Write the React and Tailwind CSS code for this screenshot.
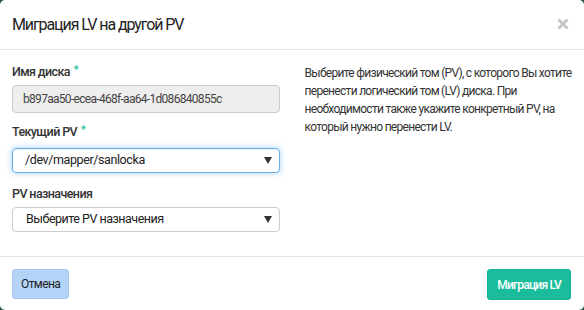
const font = { fontFamily: 'Roboto, "Liberation Sans", sans-serif' };

const Caret = () => (
  <svg width="8" height="7" viewBox="0 0 8 7" className="shrink-0">
    <path d="M0 0 L8 0 L4 7 Z" fill="#333" />
  </svg>
);

const Label = ({ children, required }) => (
  <div className="h-[18px] leading-[18px] text-[12.5px] font-medium tracking-[-0.6px] text-[#333]">
    {children}
    {required && <span className="ml-[4px] text-[#1abc9c] align-top text-[11px] leading-[14px]">*</span>}
  </div>
);

export default function App() {
  return (
    <div className="w-[584px] h-[310px] bg-[#214a45]" style={font}>
      <div className="w-full h-full bg-white rounded-[5px] flex flex-col">
        <div className="h-[50px] border-b border-[#e5e5e5] flex items-center justify-between px-3">
          <h4 className="text-[16px] tracking-[-1.1px] text-[#222] leading-none">Миграция LV на другой PV</h4>
          <svg width="12" height="12" viewBox="0 0 12 12" className="mr-[3px] -mt-[2px]">
            <path d="M1.5 1.5 L10.5 10.5 M10.5 1.5 L1.5 10.5" stroke="#c6c6c6" strokeWidth="3" />
          </svg>
        </div>

        <div className="px-3 grid grid-cols-2 gap-[25px] h-[206px]">
          <div className="flex flex-col">
            <div className="mt-[13px]">
              <Label required>Имя диска</Label>
            </div>
            <div className="mt-[4px] h-[28px] rounded-[4px] border border-[#cccccc] bg-[#eeeeee] flex items-center pl-[10px] text-[12px] tracking-[-0.7px] text-[#444]">
              b897aa50-ecea-468f-aa64-1d086840855c
            </div>
            <div className="mt-[10px]">
              <Label required>Текущий PV</Label>
            </div>
            <div className="mt-[7px] h-[25px] rounded-[4px] border border-[#66afe9] shadow-[inset_0_1px_1px_rgba(0,0,0,0.075),0_0_6px_rgba(102,175,233,0.6)] flex items-center justify-between pl-[12px] pr-[7px] text-[12.5px] tracking-[-0.4px] text-[#222]">
              <span>/dev/mapper/sanlocka</span>
              <Caret />
            </div>
            <div className="mt-[12px]">
              <Label>PV назначения</Label>
            </div>
            <div className="mt-[4px] h-[25px] rounded-[4px] border border-[#cccccc] flex items-center justify-between pl-[13px] pr-[7px] text-[12.5px] tracking-[-0.5px] text-[#222]">
              <span>Выберите PV назначения</span>
              <Caret />
            </div>
          </div>

          <div className="pt-[14px] text-[12px] tracking-[-0.7px] leading-[18px] text-[#333]">
            Выберите физический том (PV), с которого Вы хотите перенести логический том (LV) диска. При
            необходимости также укажите конкретный PV, на который нужно перенести LV.
          </div>
        </div>

        <div className="border-t border-[#e5e5e5] flex items-start justify-between px-3 pt-[12px]">
          <button className="h-[30px] px-[8px] rounded-[3px] border border-[#a6c8f0] bg-[#b3d3f7] text-[12px] tracking-[-0.6px] text-[#222]">
            Отмена
          </button>
          <button className="h-[31px] px-[9px] mr-[1px] rounded-[3px] bg-[#1abc9c] border border-[#17b193] text-[12px] tracking-[-0.8px] text-white font-medium">
            Миграция LV
          </button>
        </div>
      </div>
    </div>
  );
}
